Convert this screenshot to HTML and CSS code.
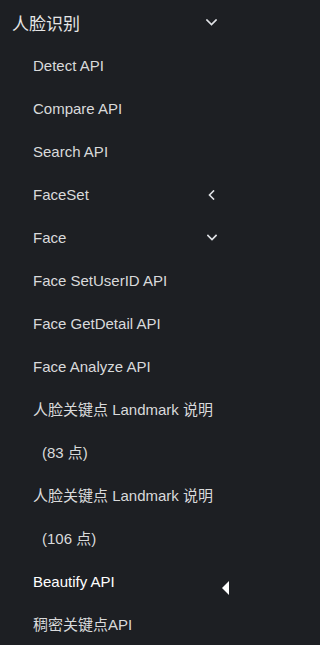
FILE: index.html
```html
<!DOCTYPE html>
<html lang="zh-CN">
<head>
<meta charset="utf-8">
<title>人脸识别</title>
<link rel="stylesheet" href="styles.css">
</head>
<body>
<nav class="menu">
  <div class="group-title">
    <span>人脸识别</span>
    <svg class="chev chev-down-lg" width="11" height="7" viewBox="0 0 11 7"><polyline points="1,1 5.5,5.5 10,1" /></svg>
  </div>
  <ul class="sub">
    <li class="item">Detect API</li>
    <li class="item">Compare API</li>
    <li class="item">Search API</li>
    <li class="item has-sub">
      <span>FaceSet</span>
      <svg class="chev chev-left" width="7" height="10" viewBox="0 0 7 10"><polyline points="5.5,1 1.5,5 5.5,9" /></svg>
    </li>
    <li class="item has-sub">
      <span>Face</span>
      <svg class="chev chev-down" width="10" height="7" viewBox="0 0 10 7"><polyline points="1,1.5 5,5.5 9,1.5" /></svg>
    </li>
    <li class="item">Face SetUserID API</li>
    <li class="item">Face GetDetail API</li>
    <li class="item">Face Analyze API</li>
    <li class="item">人脸关键点 Landmark 说明<br><span class="indent">(83 点)</span></li>
    <li class="item">人脸关键点 Landmark 说明<br><span class="indent">(106 点)</span></li>
    <li class="item active">Beautify API<span class="marker"></span></li>
    <li class="item">稠密关键点API</li>
  </ul>
</nav>
</body>
</html>
```
FILE: styles.css
```css
html, body {
  margin: 0;
  padding: 0;
  background: #1d1f23;
}

body {
  font-family: "Liberation Sans", "Noto Sans CJK SC", sans-serif;
  color: #d9dadb;
  width: 229px;
  height: 645px;
  overflow: hidden;
}

.menu {
  padding-top: 1px;
}

.group-title {
  display: flex;
  align-items: center;
  justify-content: space-between;
  height: 43px;
  line-height: 43px;
  padding: 0 12px 0 12px;
  font-family: "Noto Sans CJK SC", sans-serif;
  font-size: 17px;
  color: #e6e6e6;
}

.sub {
  list-style: none;
  margin: 0;
  padding: 0;
}

.item {
  position: relative;
  line-height: 43px;
  font-size: 15px;
  padding: 0 12px 0 33px;
}

.has-sub {
  display: flex;
  align-items: center;
  justify-content: space-between;
}

.indent {
  padding-left: 9px;
}

.chev {
  fill: none;
  stroke: #e0e2e6;
  stroke-width: 1.6;
  stroke-linecap: square;
}

.chev-left {
  margin-right: 2px;
}

.active {
  color: #ffffff;
}

.marker {
  position: absolute;
  right: 0;
  top: 21px;
  width: 0;
  height: 0;
  border-top: 7px solid transparent;
  border-bottom: 7px solid transparent;
  border-right: 7px solid #ffffff;
}
```
